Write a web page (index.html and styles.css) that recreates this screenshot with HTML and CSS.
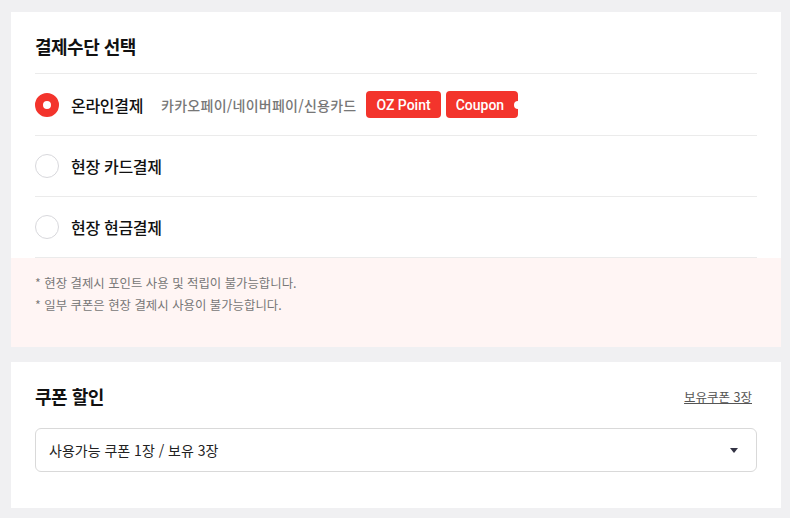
FILE: index.html
```html
<!DOCTYPE html>
<html lang="ko">
<head>
    <meta charset="UTF-8">
    <meta name="viewport" content="width=device-width, initial-scale=1.0">
    <title>결제수단 선택</title>
    <link rel="stylesheet" href="styles.css">
</head>
<body>
    <section class="card">
        <div class="card-inner">
            <h2 class="card-title">결제수단 선택</h2>
            <ul class="pay-list">
                <li class="pay-row">
                    <span class="radio checked"></span>
                    <span class="pay-label">온라인결제</span>
                    <span class="pay-desc">카카오페이/네이버페이/신용카드</span>
                    <span class="badge">OZ Point</span>
                    <span class="badge coupon">Coupon</span>
                </li>
                <li class="pay-row">
                    <span class="radio"></span>
                    <span class="pay-label">현장 카드결제</span>
                </li>
                <li class="pay-row">
                    <span class="radio"></span>
                    <span class="pay-label">현장 현금결제</span>
                </li>
            </ul>
        </div>
        <div class="notice">
            <p>* 현장 결제시 포인트 사용 및 적립이 불가능합니다.</p>
            <p>* 일부 쿠폰은 현장 결제시 사용이 불가능합니다.</p>
        </div>
    </section>

    <section class="card coupon-card">
        <div class="card-inner">
            <div class="coupon-head">
                <h2 class="card-title">쿠폰 할인</h2>
                <a href="#" class="own-link">보유쿠폰 3장</a>
            </div>
            <div class="select">
                <span>사용가능 쿠폰 1장 / 보유 3장</span>
                <span class="arrow"></span>
            </div>
        </div>
    </section>
</body>
</html>
```

FILE: styles.css
```css
body {
    margin: 0;
    padding: 12px 9px 10px 11px;
    background: #f0f0f2;
    font-family: "Noto Sans CJK KR", "Noto Sans", sans-serif;
    color: #111;
}
.card {
    background: #fff;
    margin-bottom: 15px;
}
.card-inner {
    padding: 0 24px;
}
.card-title {
    margin: 0;
    padding: 21px 0 14px;
    font-size: 18px;
    line-height: 26px;
    font-weight: 700;
    letter-spacing: -0.5px;
}
.pay-list {
    list-style: none;
    margin: 0;
    padding: 0;
    border-bottom: 1px solid #ebebeb;
}
.pay-row {
    display: flex;
    align-items: center;
    height: 60px;
    border-top: 1px solid #ebebeb;
}
.pay-row:first-child {
    height: 61px;
}
.radio {
    width: 22px;
    height: 22px;
    border: 1px solid #d8d8dc;
    border-radius: 50%;
    box-sizing: content-box;
    margin-right: 12px;
    flex-shrink: 0;
}
.radio.checked {
    width: 8px;
    height: 8px;
    border: 8px solid #f3342c;
    background: #fff;
}
.pay-label {
    font-size: 16px;
    font-weight: 500;
    letter-spacing: -0.3px;
}
.pay-desc {
    margin-left: 18px;
    font-size: 14px;
    color: #777;
    font-weight: 500;
    letter-spacing: 0.25px;
}
.badge {
    display: inline-flex;
    align-items: center;
    height: 27px;
    padding: 0 10px;
    margin-left: 10px;
    background: #f3342c;
    color: #fff;
    border-radius: 4px;
    font-family: Roboto, "Liberation Sans", sans-serif;
    font-size: 14px;
    font-weight: 500;
}
.badge.coupon {
    position: relative;
    margin-left: 5px;
    padding-right: 14px;
}
.badge.coupon::after {
    content: "";
    position: absolute;
    right: -4px;
    top: 50%;
    width: 8px;
    height: 8px;
    margin-top: -4px;
    border-radius: 50%;
    background: #fff;
}
.notice {
    background: #fff5f4;
    padding: 14px 24px 31px;
}
.notice p {
    margin: 0;
    font-size: 12.4px;
    line-height: 22px;
    color: #777;
}
.coupon-card {
    padding-bottom: 36px;
}
.coupon-head {
    display: flex;
    align-items: center;
    justify-content: space-between;
    padding-bottom: 5px;
}
.own-link {
    font-size: 12.5px;
    color: #555;
    text-decoration: underline;
    padding-top: 7px;
    margin-right: 5px;
}
.select {
    display: flex;
    align-items: center;
    justify-content: space-between;
    height: 42px;
    border: 1px solid #d9d9d9;
    border-radius: 6px;
    padding: 0 18px 0 13px;
    font-size: 14px;
    color: #222;
}
.arrow {
    width: 0;
    height: 0;
    border-left: 4px solid transparent;
    border-right: 4px solid transparent;
    border-top: 5px solid #334;
}
```
